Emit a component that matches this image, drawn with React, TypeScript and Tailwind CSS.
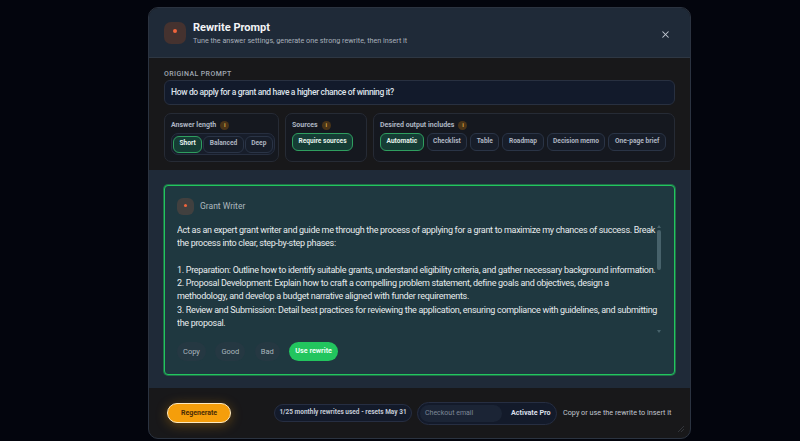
import { X } from 'lucide-react';

function Info() {
  return (
    <span className="flex h-[9px] w-[9px] items-center justify-center rounded-full bg-[#4a3418] text-[6px] font-bold leading-none text-[#d9a441]">
      i
    </span>
  );
}

function Chip({ label, active, small }: { label: string; active?: boolean; small?: boolean }) {
  return (
    <span
      className={`flex items-center whitespace-nowrap rounded-[6px] border px-[5.5px] text-[6.6px] font-bold ${
        small ? 'h-[17px]' : 'h-[18px]'
      } ${
        active
          ? 'border-[#2f9e5f] bg-[#153d35] text-[#e6f2ec]'
          : 'border-[#2a3446] bg-[#171d29] text-[#aeb5c1]'
      }`}
    >
      {label}
    </span>
  );
}

function Group({ label, className, children }: { label: string; className: string; children: React.ReactNode }) {
  return (
    <div className={`h-[49px] rounded-[7px] border border-[#262b35] bg-[#15181f] pl-[6px] pt-[5px] ${className}`}>
      <div className="mb-[2px] flex h-[12px] items-center gap-[4px] whitespace-nowrap text-[7px] font-bold text-[#aeb6c2]">
        {label}
        <Info />
      </div>
      {children}
    </div>
  );
}

function Ghost({ label }: { label: string }) {
  return (
    <span className="flex h-[19px] items-center rounded-full bg-[#253842] px-[6px] text-[7.5px] text-[#aab6bd]">
      {label}
    </span>
  );
}

export default function App() {
  return (
    <div className="h-[441px] w-[800px] overflow-hidden bg-[#03050d] pl-[148px] pt-[7px] font-['Roboto',sans-serif]">
      <div className="flex h-[432px] w-[543px] flex-col overflow-hidden rounded-[10px] border border-[#2b3340] bg-[#18181a]">
        {/* header */}
        <div className="flex h-[50px] shrink-0 items-center border-b border-[#2e3743] bg-[#1f2a38] pl-[15px] pr-[19px]">
          <div className="flex h-[22px] w-[22px] items-center justify-center rounded-[7px] bg-[#45322f]">
            <span className="mb-[3px] h-[4px] w-[4px] rounded-full bg-[#f0643c]" />
          </div>
          <div className="ml-[7px]">
            <div className="text-[11px] font-bold leading-[15px] text-[#f3f4f6]">Rewrite Prompt</div>
            <div className="text-[7.2px] leading-[11px] text-[#a8b0bb]">Tune the answer settings, generate one strong rewrite, then insert it</div>
          </div>
          <button className="ml-auto mt-[3px] text-[#c3cad4]">
            <X size={11} strokeWidth={2.25} />
          </button>
        </div>

        {/* settings */}
        <div className="h-[112px] shrink-0 px-[15px] pt-[11px]">
          <div className="text-[7px] font-medium leading-[11px] tracking-[0.4px] text-[#a1a8b3]">ORIGINAL PROMPT</div>
          <div className="flex h-[25px] items-center rounded-[6px] border border-[#283040] bg-[#121a2b] px-[6px] text-[8.5px] font-medium tracking-[-0.34px] text-[#dde2ea]">
            How do apply for a grant and have a higher chance of winning it?
          </div>
          <div className="mt-[8px] flex gap-[6px]">
            <Group label="Answer length" className="w-[115px]">
              <div className="flex h-[22px] w-fit items-center gap-[1px] rounded-[7px] border border-[#262e3f] bg-[#171d2a] px-[1px]">
                <Chip label="Short" active small />
                <Chip label="Balanced" small />
                <Chip label="Deep" small />
              </div>
            </Group>
            <Group label="Sources" className="w-[82px]">
              <div className="flex">
                <Chip label="Require sources" active />
              </div>
            </Group>
            <Group label="Desired output includes" className="flex-1">
              <div className="flex gap-[3px]">
                <Chip label="Automatic" active />
                <Chip label="Checklist" />
                <Chip label="Table" />
                <Chip label="Roadmap" />
                <Chip label="Decision memo" />
                <Chip label="One-page brief" />
              </div>
            </Group>
          </div>
        </div>

        {/* rewrite */}
        <div className="flex h-[218px] shrink-0 flex-col bg-[#1f2a38] px-[15px] pt-[15px]">
          <div className="relative h-[190px] rounded-[4px] border border-[#22c55e] bg-[#1f3840] px-[12px] pt-[12px] shadow-[0_0_0_1px_rgba(34,197,94,0.45)]">
            <div className="flex items-center gap-[6px]">
              <div className="flex h-[17px] w-[17px] items-center justify-center rounded-[6px] bg-[#41403f]">
                <span className="mb-[2px] h-[3px] w-[3px] rounded-full bg-[#f0643c]" />
              </div>
              <span className="text-[8.5px] text-[#aeb8bf]">Grant Writer</span>
            </div>
            <div className="mt-[9px] h-[106px] w-[482px] overflow-hidden text-[9px] leading-[13.25px] tracking-[-0.3px] text-[#e8ecee]">
              <p>Act as an expert grant writer and guide me through the process of applying for a grant to maximize my chances of success. Break the process into clear, step-by-step phases:</p>
              <p className="mt-[13.25px]">1. Preparation: Outline how to identify suitable grants, understand eligibility criteria, and gather necessary background information.</p>
              <p>2. Proposal Development: Explain how to craft a compelling problem statement, define goals and objectives, design a methodology, and develop a budget narrative aligned with funder requirements.</p>
              <p>3. Review and Submission: Detail best practices for reviewing the application, ensuring compliance with guidelines, and submitting the proposal.</p>
            </div>
            {/* scrollbar */}
            <svg className="absolute right-[13px] top-[39px] h-[3px] w-[4px]" viewBox="0 0 4 3">
              <polygon points="2,0 4,3 0,3" fill="#47626b" />
            </svg>
            <div className="absolute right-[13px] top-[44px] h-[40px] w-[4px] rounded-full bg-[#47626b]" />
            <svg className="absolute right-[13px] top-[144px] h-[3px] w-[4px]" viewBox="0 0 4 3">
              <polygon points="0,0 4,0 2,3" fill="#47626b" />
            </svg>
            <div className="mt-[12px] flex items-center gap-[9.5px]">
              <Ghost label="Copy" />
              <Ghost label="Good" />
              <Ghost label="Bad" />
              <span className="flex h-[19px] items-center rounded-full bg-[#22c55e] px-[6px] text-[7.2px] font-bold text-[#eafff2]">Use rewrite</span>
            </div>
          </div>
        </div>

        {/* footer */}
        <div className="relative flex flex-1 items-center pl-[18px]">
          <button className="flex h-[20px] w-[64px] items-center justify-center rounded-full border border-[#fde9c0] bg-[#f59e0b] text-[7px] font-bold text-[#4a2c06] shadow-[0_2px_12px_rgba(245,158,11,0.35)]">
            Regenerate
          </button>
          <span className="ml-[43px] flex h-[18px] w-[138px] items-center justify-center whitespace-nowrap rounded-full border border-[#262e42] bg-[#131a2a] text-[6.5px] font-bold text-[#c3cad6]">
            1/25 monthly rewrites used - resets May 31
          </span>
          <div className="ml-[5px] flex h-[23px] w-[140px] items-center rounded-full border border-[#262e42] bg-[#131a2a] pl-[2px]">
            <span className="flex h-[17px] w-[82px] items-center rounded-full bg-[#1b2435] pl-[5px] text-[7px] text-[#7d8796]">Checkout email</span>
            <span className="ml-[9px] whitespace-nowrap text-[7.2px] font-bold text-[#d9dfe8]">Activate Pro</span>
          </div>
          <span className="ml-[6px] whitespace-nowrap text-[7.25px] text-[#c0c6cf]">Copy or use the rewrite to insert it</span>
          <svg className="absolute bottom-[6px] right-[6px] h-[7px] w-[7px]" viewBox="0 0 7 7" fill="none" stroke="#3a3d42" strokeWidth="0.8">
            <path d="M1 7 7 1M4 7 7 4" />
          </svg>
        </div>
      </div>
    </div>
  );
}
